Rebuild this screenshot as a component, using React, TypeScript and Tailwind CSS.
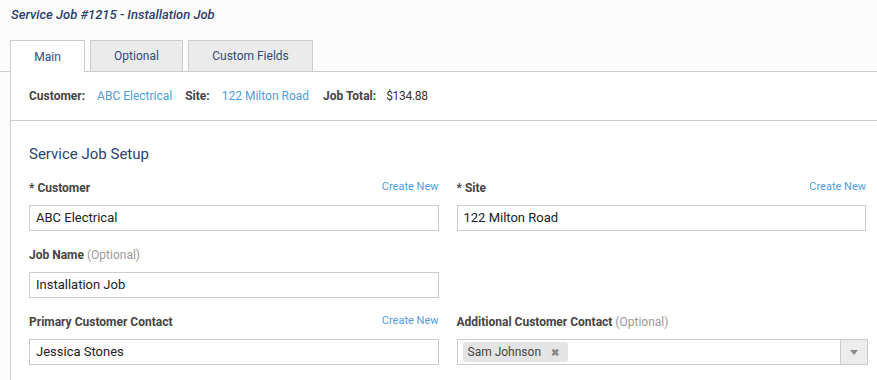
import React from "react";

const tabs = [
  { name: "Main", w: "w-[75px]", active: true },
  { name: "Optional", w: "w-[93px]", active: false },
  { name: "Custom Fields", w: "w-[125px]", active: false },
];

const Label = ({ text, optional, createNew }: { text: string; optional?: boolean; createNew?: boolean }) => (
  <div className="h-[20px] mb-[7px] flex items-center justify-between">
    <span className="text-[12px] font-bold text-[#444]">
      {text}
      {optional && <span className="font-normal text-[#999]"> (Optional)</span>}
    </span>
    {createNew && <span className="text-[11px] text-[#4d9de0] -mt-[2px]">Create New</span>}
  </div>
);

const Input = ({ value }: { value: string }) => (
  <div className="h-[26px] border border-[#ccc] bg-white flex items-center px-[6px] text-[13px] text-[#222]">
    {value}
  </div>
);

export default function App() {
  return (
    <div className="w-full h-[380px] overflow-hidden bg-[#fcfcfc] font-['Roboto',sans-serif]">
      <div className="pl-[11px] pt-[7px] h-[40px] text-[13px] leading-[16px] italic font-medium text-[#2b3f6c]">
        Service Job #1215 - Installation Job
      </div>

      <div className="flex items-end gap-[5px] pl-[10px] border-b border-[#ccc] h-[32px]">
        {tabs.map((t) => (
          <div
            key={t.name}
            className={
              t.active
                ? `${t.w} h-[32px] -mb-px bg-white border border-b-0 border-[#ccc] flex items-center justify-center text-[12px] text-[#2f4b7c]`
                : `${t.w} h-[31px] bg-[#ebebeb] border border-b-0 border-[#ccc] flex items-center justify-center text-[12px] text-[#2f4b7c]`
            }
          >
            {t.name}
          </div>
        ))}
      </div>

      <div className="ml-[10px] border-l border-[#ccc] bg-white h-full">
        <div className="h-[49px] border-b border-[#ccc] flex items-center pl-[18px] text-[12px]">
          <span className="font-bold text-[#444] mr-[12px]">Customer:</span>
          <span className="text-[#4d9de0] mr-[13px]">ABC Electrical</span>
          <span className="font-bold text-[#444] mr-[12px]">Site:</span>
          <span className="text-[#4d9de0] mr-[14px]">122 Milton Road</span>
          <span className="font-bold text-[#444] mr-[10px]">Job Total:</span>
          <span className="text-[#333] tracking-[-0.3px]">$134.88</span>
        </div>

        <div className="pl-[18px] pr-[11px] pt-[23px]">
          <div className="h-[20px] mb-[14px] text-[15px] leading-[20px] text-[#2b4273]">Service Job Setup</div>

          <div className="grid grid-cols-2 gap-x-[18px] gap-y-[14px]">
            <div>
              <Label text="* Customer" createNew />
              <Input value="ABC Electrical" />
            </div>
            <div>
              <Label text="* Site" createNew />
              <Input value="122 Milton Road" />
            </div>
            <div>
              <Label text="Job Name" optional />
              <Input value="Installation Job" />
            </div>
            <div />
            <div>
              <Label text="Primary Customer Contact" createNew />
              <Input value="Jessica Stones" />
            </div>
            <div className="-mr-[2px]">
              <Label text="Additional Customer Contact" optional />
              <div className="h-[26px] border border-[#ccc] bg-white flex items-stretch">
                <div className="flex-1 flex items-center pl-[5px]">
                  <span className="h-[20px] rounded-[3px] bg-[#e4e4e4] flex items-center pl-[5px] pr-[9px] text-[12px] text-[#444]">
                    Sam Johnson
                    <span className="ml-[10px] text-[10px] font-bold text-[#888]">✖</span>
                  </span>
                </div>
                <div className="w-[27px] bg-[#ececec] border-l border-[#ccc] flex items-center justify-center">
                  <svg width="8" height="5" viewBox="0 0 8 5">
                    <path d="M0 0 L8 0 L4 5 Z" fill="#888" />
                  </svg>
                </div>
              </div>
            </div>
          </div>
        </div>
      </div>
    </div>
  );
}
